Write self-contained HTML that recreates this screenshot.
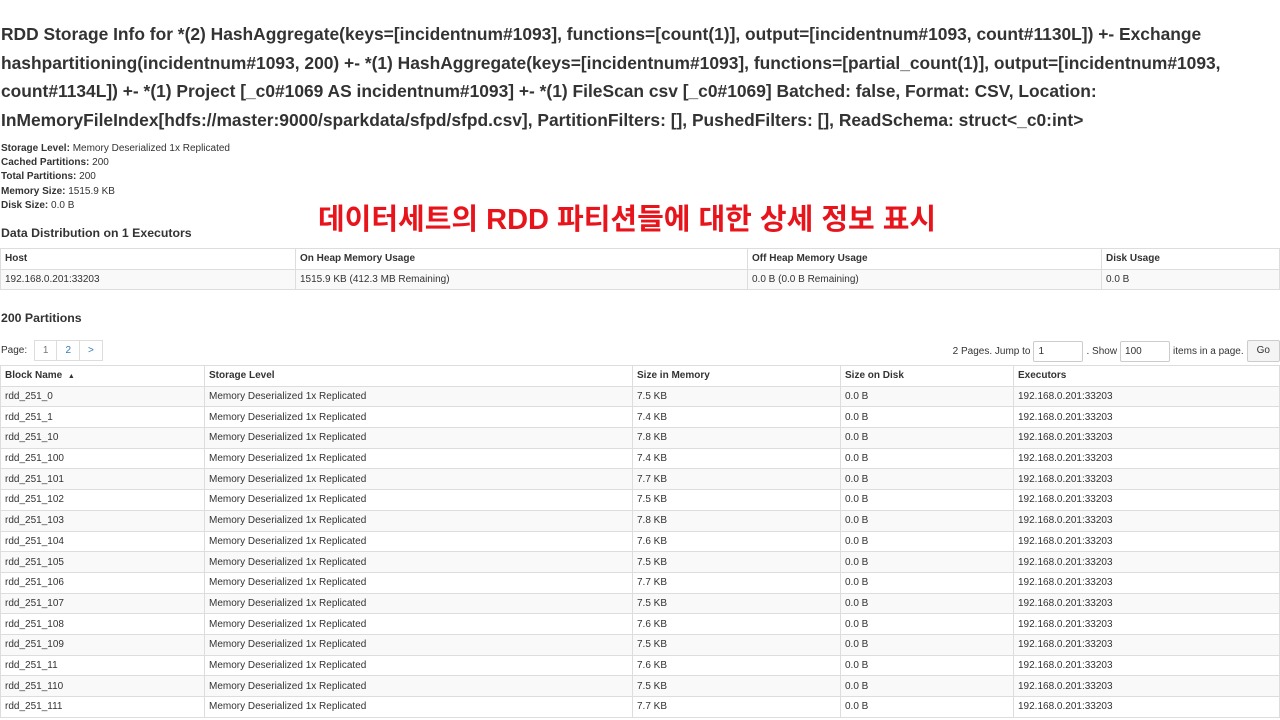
<!DOCTYPE html>
<html><head><meta charset="utf-8"><style>
body{margin:0;font-family:"Liberation Sans",Arial,sans-serif;color:#333;font-size:10px;background:#fff;width:1280px;height:720px;overflow:hidden;position:relative}
h3{margin:0;position:absolute;left:1px;top:20px;font-size:17.4px;font-weight:bold;line-height:28.5px;white-space:nowrap;color:#333}
.info{position:absolute;left:1px;top:142px;line-height:14.2px;font-size:10px}
.info b{font-weight:bold}
h4{margin:0;position:absolute;left:1px;font-size:12.3px;font-weight:bold}
table{position:absolute;left:0;border-collapse:collapse;font-size:10px;width:1280px}
td,th{border:1px solid #ddd;padding:0 4px;text-align:left;height:19.7px;white-space:nowrap}
th{font-weight:bold}
tr.o td{background:#f9f9f9}
.red{position:absolute;left:318px;top:196px;font-family:"Liberation Sans","Noto Sans CJK KR",sans-serif;font-weight:bold;font-size:29px;color:#e8141c;white-space:nowrap}
.pg{position:absolute;left:1px;top:340px;font-size:10px;display:flex;align-items:center}
.pg span.b{display:inline-block;border:1px solid #ddd;height:19px;line-height:19px;padding:0 8px;color:#337ab7;margin-left:-1px}
.rt{position:absolute;right:0;top:340px;display:flex;align-items:center;font-size:10px}
.rt .in{border:1px solid #ccc;height:19px;width:44px;line-height:19px;padding-left:4px;margin:0 3px;border-radius:2px}
.rt .go{border:1px solid #ccc;background:#f4f4f4;height:20px;line-height:20px;padding:0 9px;margin-left:3px;border-radius:2px}
</style></head><body>
<h3>RDD Storage Info for *(2) HashAggregate(keys=[incidentnum#1093], functions=[count(1)], output=[incidentnum#1093, count#1130L]) +- Exchange<br>hashpartitioning(incidentnum#1093, 200) +- *(1) HashAggregate(keys=[incidentnum#1093], functions=[partial_count(1)], output=[incidentnum#1093,<br>count#1134L]) +- *(1) Project [_c0#1069 AS incidentnum#1093] +- *(1) FileScan csv [_c0#1069] Batched: false, Format: CSV, Location:<br>InMemoryFileIndex[hdfs://master:9000/sparkdata/sfpd/sfpd.csv], PartitionFilters: [], PushedFilters: [], ReadSchema: struct&lt;_c0:int&gt;</h3>
<div class="info"><b>Storage Level:</b> Memory Deserialized 1x Replicated<br><b>Cached Partitions:</b> 200<br><b>Total Partitions:</b> 200<br><b>Memory Size:</b> 1515.9 KB<br><b>Disk Size:</b> 0.0 B</div>
<div class="red">데이터세트의 RDD 파티션들에 대한 상세 정보 표시</div>
<h4 style="top:226px">Data Distribution on 1 Executors</h4>
<table style="top:248px">
<tr><th style="width:286px">Host</th><th style="width:443px">On Heap Memory Usage</th><th style="width:345px">Off Heap Memory Usage</th><th>Disk Usage</th></tr>
<tr class="o"><td>192.168.0.201:33203</td><td>1515.9 KB (412.3 MB Remaining)</td><td>0.0 B (0.0 B Remaining)</td><td>0.0 B</td></tr>
</table>
<h4 style="top:311px">200 Partitions</h4>
<div class="pg">Page:&nbsp;<span class="b" style="color:#777;margin-left:4px">1</span><span class="b">2</span><span class="b">&gt;</span></div>
<div class="rt">2 Pages. Jump to <span class="in">1</span> . Show <span class="in">100</span> items in a page. <span class="go">Go</span></div>
<table style="top:365px">
<tr><th style="width:195px">Block Name &nbsp;<span style="font-size:7px">▲</span></th><th style="width:419px">Storage Level</th><th style="width:199px">Size in Memory</th><th style="width:164px">Size on Disk</th><th>Executors</th></tr>
<tr class="o"><td>rdd_251_0</td><td>Memory Deserialized 1x Replicated</td><td>7.5 KB</td><td>0.0 B</td><td>192.168.0.201:33203</td></tr>
<tr><td>rdd_251_1</td><td>Memory Deserialized 1x Replicated</td><td>7.4 KB</td><td>0.0 B</td><td>192.168.0.201:33203</td></tr>
<tr class="o"><td>rdd_251_10</td><td>Memory Deserialized 1x Replicated</td><td>7.8 KB</td><td>0.0 B</td><td>192.168.0.201:33203</td></tr>
<tr><td>rdd_251_100</td><td>Memory Deserialized 1x Replicated</td><td>7.4 KB</td><td>0.0 B</td><td>192.168.0.201:33203</td></tr>
<tr class="o"><td>rdd_251_101</td><td>Memory Deserialized 1x Replicated</td><td>7.7 KB</td><td>0.0 B</td><td>192.168.0.201:33203</td></tr>
<tr><td>rdd_251_102</td><td>Memory Deserialized 1x Replicated</td><td>7.5 KB</td><td>0.0 B</td><td>192.168.0.201:33203</td></tr>
<tr class="o"><td>rdd_251_103</td><td>Memory Deserialized 1x Replicated</td><td>7.8 KB</td><td>0.0 B</td><td>192.168.0.201:33203</td></tr>
<tr><td>rdd_251_104</td><td>Memory Deserialized 1x Replicated</td><td>7.6 KB</td><td>0.0 B</td><td>192.168.0.201:33203</td></tr>
<tr class="o"><td>rdd_251_105</td><td>Memory Deserialized 1x Replicated</td><td>7.5 KB</td><td>0.0 B</td><td>192.168.0.201:33203</td></tr>
<tr><td>rdd_251_106</td><td>Memory Deserialized 1x Replicated</td><td>7.7 KB</td><td>0.0 B</td><td>192.168.0.201:33203</td></tr>
<tr class="o"><td>rdd_251_107</td><td>Memory Deserialized 1x Replicated</td><td>7.5 KB</td><td>0.0 B</td><td>192.168.0.201:33203</td></tr>
<tr><td>rdd_251_108</td><td>Memory Deserialized 1x Replicated</td><td>7.6 KB</td><td>0.0 B</td><td>192.168.0.201:33203</td></tr>
<tr class="o"><td>rdd_251_109</td><td>Memory Deserialized 1x Replicated</td><td>7.5 KB</td><td>0.0 B</td><td>192.168.0.201:33203</td></tr>
<tr><td>rdd_251_11</td><td>Memory Deserialized 1x Replicated</td><td>7.6 KB</td><td>0.0 B</td><td>192.168.0.201:33203</td></tr>
<tr class="o"><td>rdd_251_110</td><td>Memory Deserialized 1x Replicated</td><td>7.5 KB</td><td>0.0 B</td><td>192.168.0.201:33203</td></tr>
<tr><td>rdd_251_111</td><td>Memory Deserialized 1x Replicated</td><td>7.7 KB</td><td>0.0 B</td><td>192.168.0.201:33203</td></tr>
</table>
</body></html>
